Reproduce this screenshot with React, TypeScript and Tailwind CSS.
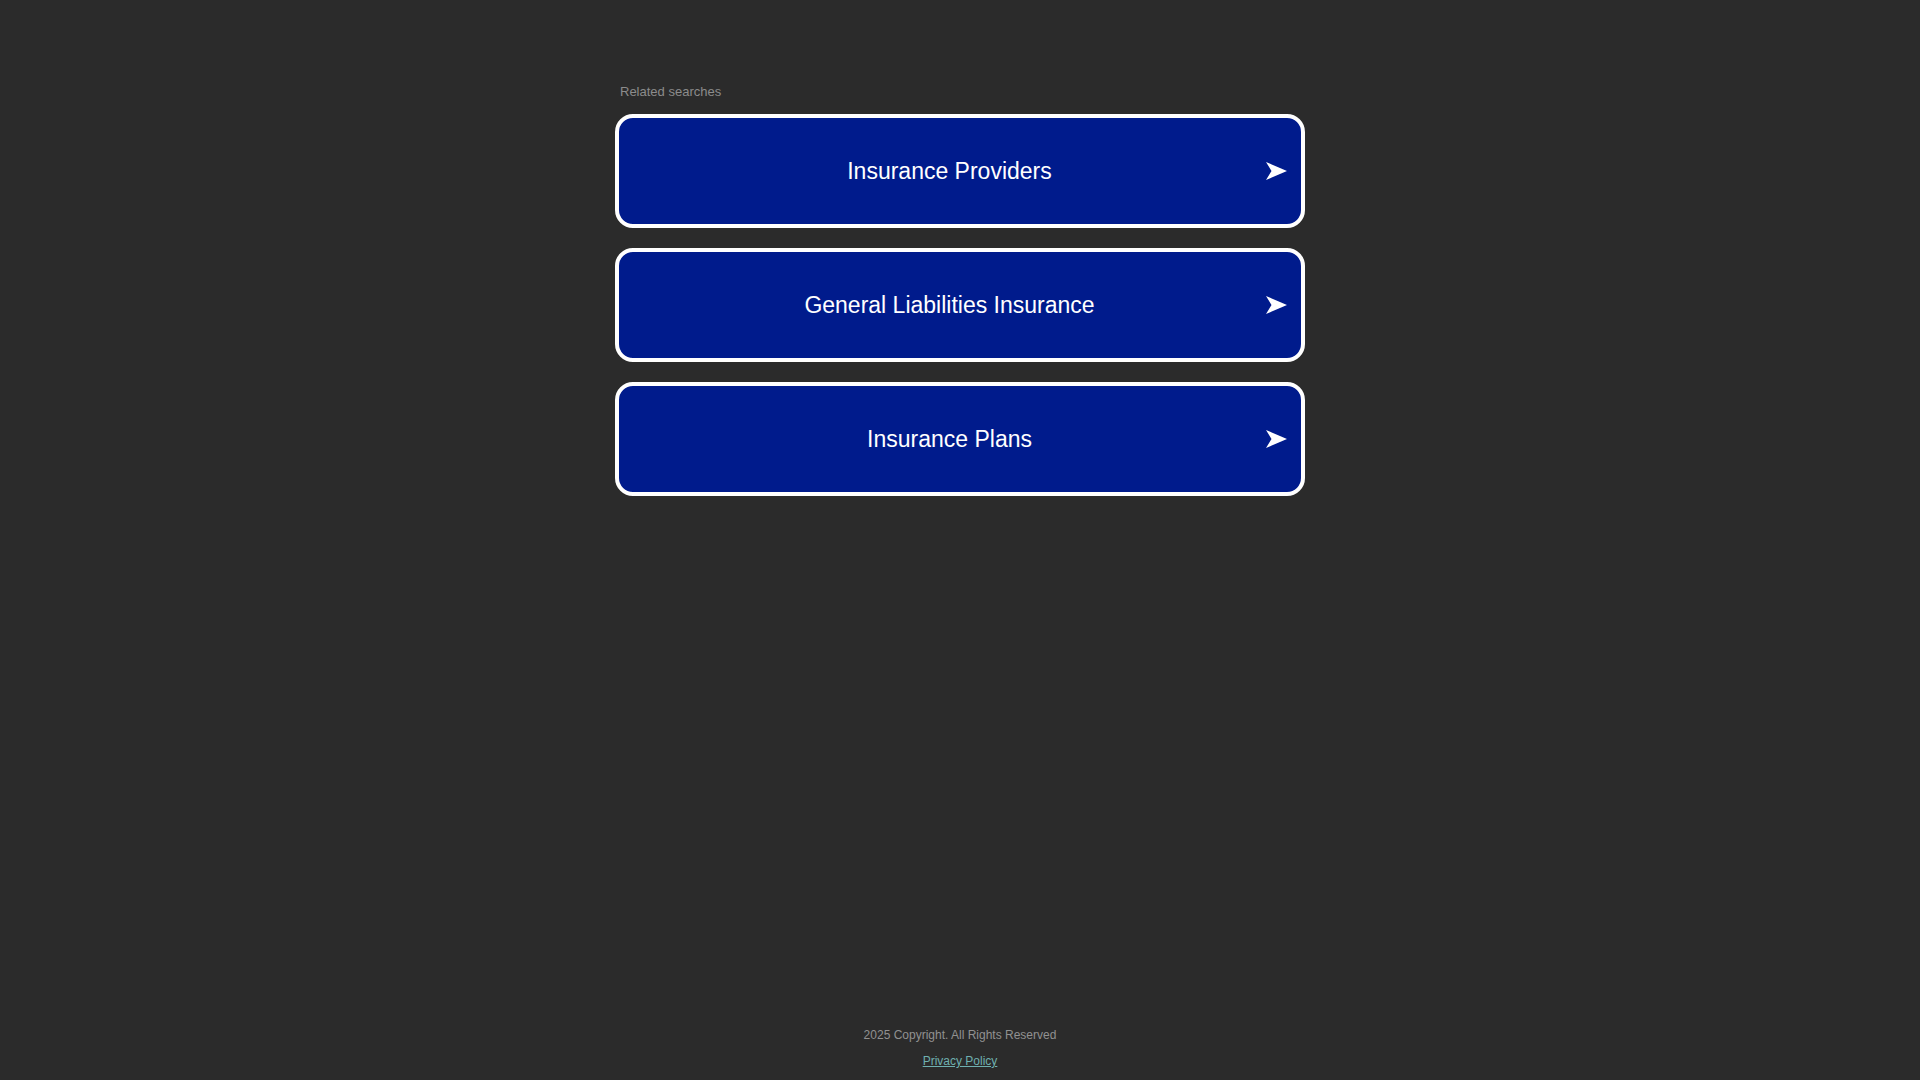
export default function App() {
  const searches = ["Insurance Providers", "General Liabilities Insurance", "Insurance Plans"]

  return (
    <div className="min-h-screen bg-[#2b2b2b] flex flex-col font-['Liberation_Sans',Arial,sans-serif]">
      <main className="flex-1 flex justify-center">
        <div className="w-[690px] pt-[84px]">
          <div className="pl-[5px] text-[13px] leading-[16px] text-[#8c8c8c] mb-[14px]">Related searches</div>
          <div className="flex flex-col gap-[20px]">
            {searches.map((s) => (
              <a
                key={s}
                href="#"
                className="h-[114px] flex items-center px-[14px] bg-[#001b8c] border-4 border-white rounded-[18px] text-white"
              >
                <span className="flex-1 text-center text-[23px] leading-none">{s}</span>
                <span className="w-[21px] flex justify-center">
                  <svg width="21" height="18" viewBox="0 0 21 18" className="block">
                    <path d="M0 0 L21 9 L0 18 L5.5 9 Z" fill="white" />
                  </svg>
                </span>
              </a>
            ))}
          </div>
        </div>
      </main>
      <footer className="flex flex-col items-center text-[12px] leading-[14px] pb-[12px]">
        <div className="text-[#919191]">2025 Copyright. All Rights Reserved</div>
        <a href="#" className="mt-[12px] text-[#6fb0b0] underline">
          Privacy Policy
        </a>
      </footer>
    </div>
  )
}
